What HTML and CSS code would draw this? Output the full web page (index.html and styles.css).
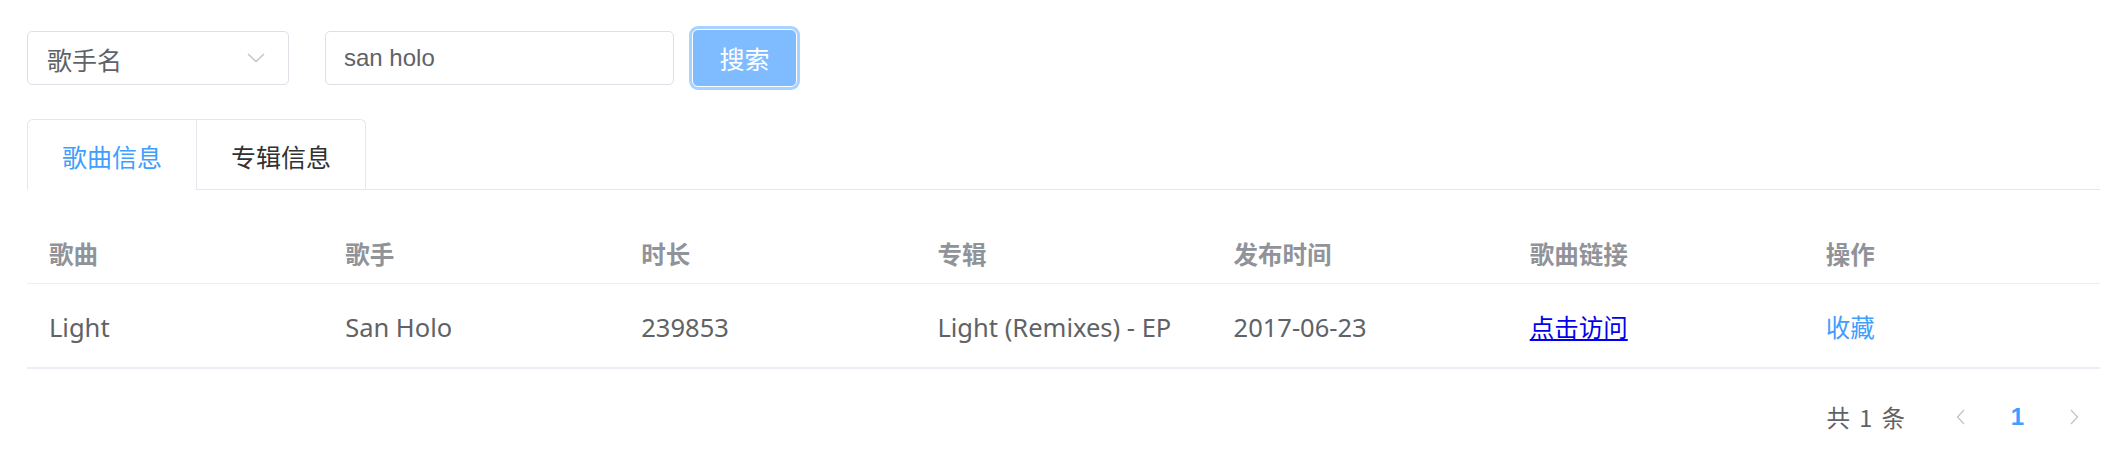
FILE: index.html
```html
<!DOCTYPE html>
<html lang="zh-CN">
<head>
<meta charset="utf-8">
<title>搜索</title>
<link rel="stylesheet" href="styles.css">
</head>
<body>
<div class="page">
  <div class="toolbar">
    <div class="select">
      <span class="select-text">歌手名</span>
      <svg class="select-arrow" width="18" height="10" viewBox="0 0 18 10"><path d="M1 1 L9 8.5 L17 1" fill="none" stroke="#c0c4cc" stroke-width="1.4"/></svg>
    </div>
    <div class="input"><span class="input-text">san holo</span></div>
    <button class="btn">搜索</button>
  </div>

  <div class="tabs-nav">
    <div class="tab-list">
      <div class="tab active">歌曲信息</div>
      <div class="tab">专辑信息</div>
    </div>
    <div class="tab-fill"></div>
  </div>

  <div class="table">
    <div class="row head">
      <div class="cell">歌曲</div>
      <div class="cell">歌手</div>
      <div class="cell">时长</div>
      <div class="cell">专辑</div>
      <div class="cell">发布时间</div>
      <div class="cell">歌曲链接</div>
      <div class="cell">操作</div>
    </div>
    <div class="row body">
      <div class="cell">Light</div>
      <div class="cell">San Holo</div>
      <div class="cell">239853</div>
      <div class="cell">Light (Remixes) - EP</div>
      <div class="cell">2017-06-23</div>
      <div class="cell"><a class="link" href="#">点击访问</a></div>
      <div class="cell"><span class="fav">收藏</span></div>
    </div>
  </div>

  <div class="pager">
    <span class="total">共 1 条</span>
    <span class="pbtn"><svg width="9" height="16" viewBox="0 0 9 16"><path d="M8 1 L1.5 8 L8 15" fill="none" stroke="#c0c4cc" stroke-width="1.3"/></svg></span>
    <span class="pbtn num">1</span>
    <span class="pbtn"><svg width="9" height="16" viewBox="0 0 9 16"><path d="M1 1 L7.5 8 L1 15" fill="none" stroke="#c0c4cc" stroke-width="1.3"/></svg></span>
  </div>
</div>
</body>
</html>
```

FILE: styles.css
```css
* { box-sizing: border-box; }
html, body { margin: 0; padding: 0; background: #fff; }
body {
  font-family: "Noto Sans", "Noto Sans CJK SC", sans-serif;
  color: #606266;
}
.page {
  padding: 29px 26px 0 27px;
}
.toolbar {
  display: flex;
  align-items: center;
  height: 58px;
}
.select {
  width: 262px;
  height: 54px;
  border: 1px solid #dcdfe6;
  border-radius: 5px;
  display: flex;
  align-items: center;
  justify-content: space-between;
  padding: 0 23px 0 19px;
}
.select-text {
  font-family: "Noto Sans CJK SC", sans-serif;
  font-size: 25px;
  color: #606266;
  line-height: 1;
  padding-top: 3px;
}
.select-arrow { display: block; }
.input {
  margin-left: 36px;
  width: 349px;
  height: 54px;
  border: 1px solid #dcdfe6;
  border-radius: 5px;
  display: flex;
  align-items: center;
  padding-left: 18px;
}
.input-text {
  font-family: "Liberation Sans", Arial, sans-serif;
  font-size: 24px;
  color: #606266;
}
.btn {
  margin-left: 18px;
  width: 105px;
  height: 58px;
  border: 1px solid #ffffff;
  border-radius: 6px;
  background: #7ebcff;
  box-shadow: 0 0 0 3px #a8d2ff;
  color: #fff;
  font-family: "Noto Sans CJK SC", sans-serif;
  font-size: 25px;
  padding: 0;
  line-height: 1;
}

.tabs-nav {
  display: flex;
  margin-top: 32px;
}
.tab-list {
  display: flex;
  border: 1px solid #e4e7ed;
  border-bottom: 0;
  border-radius: 6px 6px 0 0;
}
.tab {
  width: 168px;
  height: 70px;
  border-bottom: 1px solid #e4e7ed;
  display: flex;
  align-items: center;
  justify-content: center;
  font-family: "Noto Sans CJK SC", sans-serif;
  font-size: 25px;
  color: #303133;
  padding-top: 2px;
}
.tab + .tab {
  width: 169px;
  border-left: 1px solid #e4e7ed;
}
.tab.active {
  color: #409eff;
  border-bottom-color: #fff;
}
.tab-fill {
  flex: 1;
  border-bottom: 1px solid #e4e7ed;
}

.table {
  margin-top: 29px;
  border-bottom: 1px solid #ebeef5;
}
.row {
  display: grid;
  grid-template-columns: repeat(7, 1fr);
  border-bottom: 1px solid #ebeef5;
  align-items: center;
}
.row.head { height: 65px; }
.row.body { height: 84px; }
.cell {
  padding-left: 22px;
  white-space: nowrap;
}
.head .cell {
  font-family: "Noto Sans CJK SC", sans-serif;
  font-weight: 700;
  font-size: 24.5px;
  color: #909399;
  padding-top: 4px;
}
.body .cell {
  font-family: "Noto Sans", "Noto Sans CJK SC", sans-serif;
  font-size: 25.5px;
  color: #606266;
  padding-top: 2px;
}
.link {
  color: #0000ee;
  text-decoration: underline;
  font-family: "Noto Sans CJK SC", sans-serif;
  font-size: 24.5px;
}
.fav {
  color: #409eff;
  font-family: "Noto Sans CJK SC", sans-serif;
  font-size: 24.5px;
}

.pager {
  margin-top: 26px;
  display: flex;
  justify-content: flex-end;
  align-items: center;
  height: 44px;
  margin-right: -3px;
}
.total {
  font-family: "Noto Sans CJK SC", sans-serif;
  font-size: 23.5px;
  word-spacing: 4px;
  color: #606266;
  margin-right: 27px;
}
.pbtn {
  width: 57px;
  display: flex;
  align-items: center;
  justify-content: center;
}
.pbtn svg { display: block; }
.num {
  font-family: "Liberation Sans", Arial, sans-serif;
  font-weight: 700;
  font-size: 24px;
  color: #409eff;
}
```
